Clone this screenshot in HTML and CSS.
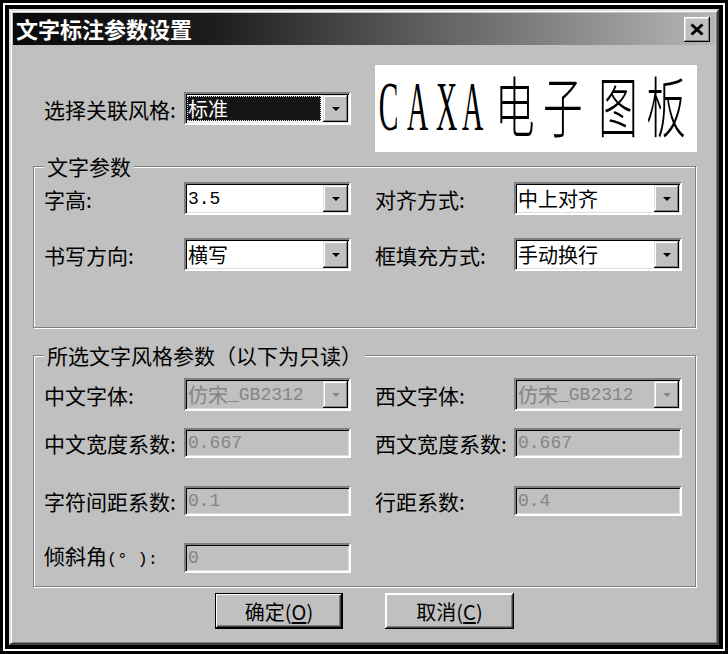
FILE: index.html
```html
<!DOCTYPE html>
<html lang="zh-CN">
<head>
  <meta charset="UTF-8">
  <title>文字标注参数设置</title>
  <link rel="stylesheet" href="styles.css">
</head>
<body>

<div class="screen">
  <div class="frame">
    <div class="dialog">
      <div class="titlebar">
        <span class="title">文字标注参数设置</span>
        <button class="close-btn" aria-label="关闭">
          <svg width="26" height="25" viewBox="0 0 26 25">
            <path d="M7.5 7.5 L18.5 17.5 M18.5 7.5 L7.5 17.5" stroke="#000" stroke-width="3" fill="none"/>
          </svg>
        </button>
      </div>

      <div class="body">
        <div class="style-row">
          <span class="label">选择关联风格:</span>
          <div class="field combo">
            <span class="value selected">标准</span>
            <span class="drop"></span>
          </div>
          <div class="preview">
            <!-- condensed sample text, like the CAD font preview -->
            <svg width="322" height="87" viewBox="0 0 322 87">
              <g transform="scale(0.42 1)">
                <text class="preview-latin" x="9 76 145 207" y="65">CAXA</text>
              </g>
              <g transform="scale(0.6 1)">
                <text class="preview-cjk" x="200 280 372 452" y="67">电子图板</text>
              </g>
            </svg>
          </div>
        </div>

        <fieldset class="group group-text">
          <legend>文字参数</legend>
          <div class="row">
            <span class="label">字高:</span>
            <div class="field combo"><span class="value"><span class="num">3.5</span></span><span class="drop"></span></div>
            <span class="label right">对齐方式:</span>
            <div class="field combo wide"><span class="value">中上对齐</span><span class="drop"></span></div>
          </div>
          <div class="row gap-23">
            <span class="label">书写方向:</span>
            <div class="field combo"><span class="value">横写</span><span class="drop"></span></div>
            <span class="label right">框填充方式:</span>
            <div class="field combo wide"><span class="value">手动换行</span><span class="drop"></span></div>
          </div>
        </fieldset>

        <fieldset class="group group-style">
          <legend>所选文字风格参数（以下为只读）</legend>
          <div class="row">
            <span class="label">中文字体:</span>
            <div class="field combo disabled"><span class="value">仿宋<span class="num">_GB2312</span></span><span class="drop"></span></div>
            <span class="label right">西文字体:</span>
            <div class="field combo wide disabled"><span class="value">仿宋<span class="num">_GB2312</span></span><span class="drop"></span></div>
          </div>
          <div class="row gap-17">
            <span class="label">中文宽度系数:</span>
            <div class="field edit disabled"><span class="value"><span class="num">0.667</span></span></div>
            <span class="label right">西文宽度系数:</span>
            <div class="field edit wide disabled"><span class="value"><span class="num">0.667</span></span></div>
          </div>
          <div class="row gap-28">
            <span class="label">字符间距系数:</span>
            <div class="field edit disabled"><span class="value"><span class="num">0.1</span></span></div>
            <span class="label right">行距系数:</span>
            <div class="field edit wide disabled"><span class="value"><span class="num">0.4</span></span></div>
          </div>
          <div class="row gap-26">
            <span class="label">倾斜角<span class="half">(° ):</span></span>
            <div class="field edit disabled"><span class="value"><span class="num">0</span></span></div>
          </div>
        </fieldset>

        <div class="actions">
          <button class="btn default">确定(<u>O</u>)</button>
          <button class="btn">取消(<u>C</u>)</button>
        </div>
      </div>
    </div>
  </div>
</div>

</body>
</html>
```

FILE: styles.css
```css
/* classic grey dialog */
* {
  box-sizing: border-box;
}

body {
  margin: 0;
  background: #000;
  font-family: "Noto Sans CJK SC", sans-serif;
  color: #000;
}

.screen {
  width: 728px;
  height: 654px;
  border: 3px solid #000;
  background: #fff;
  padding: 2px;
}

.frame {
  height: 100%;
  border: 4px solid #000;
}

.dialog {
  height: 100%;
  display: flex;
  flex-direction: column;
  background: #c0c0c0;
  border: 2px solid;
  border-color: #dfdfdf #404040 #404040 #dfdfdf;
  box-shadow: inset 1px 1px #fff, inset -1px -1px #808080;
  padding: 2px;
}

.titlebar {
  flex: none;
  height: 32px;
  display: flex;
  align-items: center;
  padding-left: 3px;
  background: linear-gradient(to right, #0a0a0a 0%, #1c1c1c 28%, #b6b6b6 100%);
}

.title {
  color: #fff;
  font-size: 22px;
  font-weight: bold;
  line-height: 1;
  margin-top: -2px;
}

.close-btn {
  margin-left: auto;
  margin-right: 5px;
  width: 26px;
  height: 25px;
  padding: 0;
  border: none;
  background: #c0c0c0;
  box-shadow: inset -1px -1px #000, inset 1px 1px #fff, inset -2px -2px #808080, inset 2px 2px #dfdfdf;
}

.close-btn svg {
  display: block;
}

.body {
  flex: 1;
  padding: 20px 19px 0 20px;
}

.style-row {
  display: flex;
  align-items: center;
  height: 87px;
  padding-left: 11px;
}

.label {
  flex: none;
  width: 140px;
  font-size: 21px;
  line-height: 26px;
  white-space: pre;
}

.label.right {
  margin-left: 24px;
  width: 139px;
}

.half {
  font-family: "Liberation Mono", monospace;
  font-size: 17px;
}

.field {
  flex: none;
  width: 167px;
  display: flex;
  align-items: stretch;
  background: #fff;
  border: 2px solid;
  border-color: #808080 #fff #fff #808080;
  box-shadow: inset 1px 1px #000, inset -1px -1px #dfdfdf;
  padding: 1px;
}

.field.wide {
  width: 168px;
}

.combo {
  height: 33px;
}

.edit {
  height: 30px;
}

.value {
  flex: 1;
  display: flex;
  align-items: center;
  padding-left: 1px;
  font-size: 20px;
  line-height: 24px;
  white-space: nowrap;
}

.num {
  font-family: "Liberation Mono", monospace;
  font-size: 18px;
}

.value.selected {
  margin: 1px 2px 1px 0;
  background: #141414;
  color: #fff;
  outline: 1px dotted #e0e0e0;
  outline-offset: -1px;
}

.drop {
  flex: none;
  width: 25px;
  display: flex;
  align-items: center;
  justify-content: center;
  background: #c0c0c0;
  box-shadow: inset -1px -1px #000, inset 1px 1px #dfdfdf, inset -2px -2px #808080, inset 2px 2px #fff;
}

.drop::after {
  content: "";
  border-left: 4px solid transparent;
  border-right: 4px solid transparent;
  border-top: 4px solid #000;
}

.disabled {
  background: #c0c0c0;
}

.disabled .value {
  color: #858585;
}

.disabled .drop::after {
  border-top-color: #858585;
}

.preview {
  flex: none;
  width: 322px;
  height: 87px;
  margin-left: 24px;
  background: #fff;
}

.preview svg {
  display: block;
  overflow: visible;
}

.preview-latin {
  font-family: "Liberation Serif", serif;
  font-size: 70px;
  fill: #000;
}

.preview-cjk {
  font-family: "Noto Sans CJK SC", sans-serif;
  font-weight: 300;
  font-size: 66px;
  fill: #000;
}

.group {
  margin: 0;
  min-width: 0;
  border: 1px solid #808080;
  box-shadow: 1px 1px 0 #fff, inset 1px 1px 0 #fff;
}

.group legend {
  padding: 0 3px;
  font-size: 21px;
  line-height: 20px;
  background: #c0c0c0;
}

.group-text {
  margin-top: 4px;
  padding: 6px 13px 56px 10px;
}

.group-style {
  margin-top: 17px;
  padding: 13px 13px 13px 10px;
}

.row {
  display: flex;
  align-items: center;
}

.gap-17 { margin-top: 17px; }
.gap-23 { margin-top: 23px; }
.gap-26 { margin-top: 26px; }
.gap-28 { margin-top: 28px; }

.actions {
  display: flex;
  justify-content: center;
  gap: 42px;
  margin-top: 6px;
}

.btn {
  width: 129px;
  height: 36px;
  padding: 0;
  border: none;
  background: #c0c0c0;
  font-family: "Noto Sans CJK SC", sans-serif;
  font-size: 20px;
  color: #000;
  box-shadow: inset -1px -1px #000, inset 1px 1px #fff, inset -2px -2px #404040, inset 2px 2px #fff, inset -3px -3px #808080;
}

.btn.default {
  width: 128px;
  box-shadow: inset 0 0 0 1px #000, inset -2px -2px #000, inset 2px 2px #fff, inset -3px -3px #404040, inset -4px -4px #808080;
}

.btn u {
  text-underline-offset: 2px;
}
```
